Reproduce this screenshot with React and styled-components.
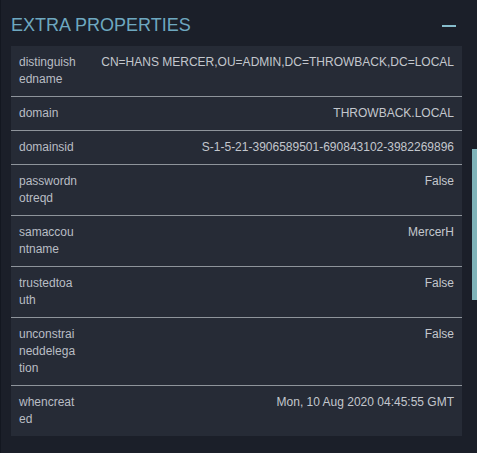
import React from "react";
import styled, { createGlobalStyle } from "styled-components";

const Global = createGlobalStyle`
  html, body { margin: 0; padding: 0; background: #1b1f29; }
  body { font-family: "Liberation Sans", Arial, sans-serif; }
`;

const Panel = styled.div`
  position: relative;
  box-sizing: border-box;
  width: 477px;
  height: 453px;
  overflow: hidden;
  border-left: 1px solid #131720;
  padding: 0 15px 0 10px;
  background: #1b1f29;
`;

const Header = styled.div`
  display: flex;
  align-items: center;
  justify-content: space-between;
  height: 46px;
  padding-right: 6px;
`;

const Title = styled.h2`
  margin: 0;
  font-size: 18px;
  font-weight: 400;
  color: #6ea8c0;
  letter-spacing: 0;
  padding-top: 5px;
`;

const Collapse = styled.span`
  display: block;
  width: 14px;
  height: 2px;
  background: #86bccc;
  margin-top: 5px;
`;

const Table = styled.div`
  background: #262b36;
  display: grid;
  grid-template-columns: 74.5px 1fr;
`;

const Row = styled.div`
  display: contents;
`;

const Cell = styled.div`
  padding: 8px;
  font-size: 12px;
  line-height: 17px;
  color: ${(p) => (p.$value ? "#c3c7cd" : "#b9bdc4")};
  text-align: ${(p) => (p.$value ? "right" : "left")};
  word-break: ${(p) => (p.$value ? "normal" : "break-all")};
  border-top: ${(p) => (p.$first ? "none" : "1px solid #8e949b")};
  ${(p) => (p.$value ? "padding-left: 4px;" : "")}
`;

const Thumb = styled.div`
  position: absolute;
  right: 0;
  top: 149px;
  width: 5px;
  height: 151px;
  background: #7fb3b9;
`;

const rows = [
  ["distinguishedname", "CN=HANS MERCER,OU=ADMIN,DC=THROWBACK,DC=LOCAL"],
  ["domain", "THROWBACK.LOCAL"],
  ["domainsid", "S-1-5-21-3906589501-690843102-3982269896"],
  ["passwordnotreqd", "False"],
  ["samaccountname", "MercerH"],
  ["trustedtoauth", "False"],
  ["unconstraineddelegation", "False"],
  ["whencreated", "Mon, 10 Aug 2020 04:45:55 GMT"],
];

export default function App() {
  return (
    <>
      <Global />
      <Panel>
        <Header>
          <Title>EXTRA PROPERTIES</Title>
          <Collapse />
        </Header>
        <Table>
          {rows.map(([k, v], i) => (
            <Row key={k}>
              <Cell $first={i === 0}>{k}</Cell>
              <Cell $value $first={i === 0}>{v}</Cell>
            </Row>
          ))}
        </Table>
        <Thumb />
      </Panel>
    </>
  );
}
